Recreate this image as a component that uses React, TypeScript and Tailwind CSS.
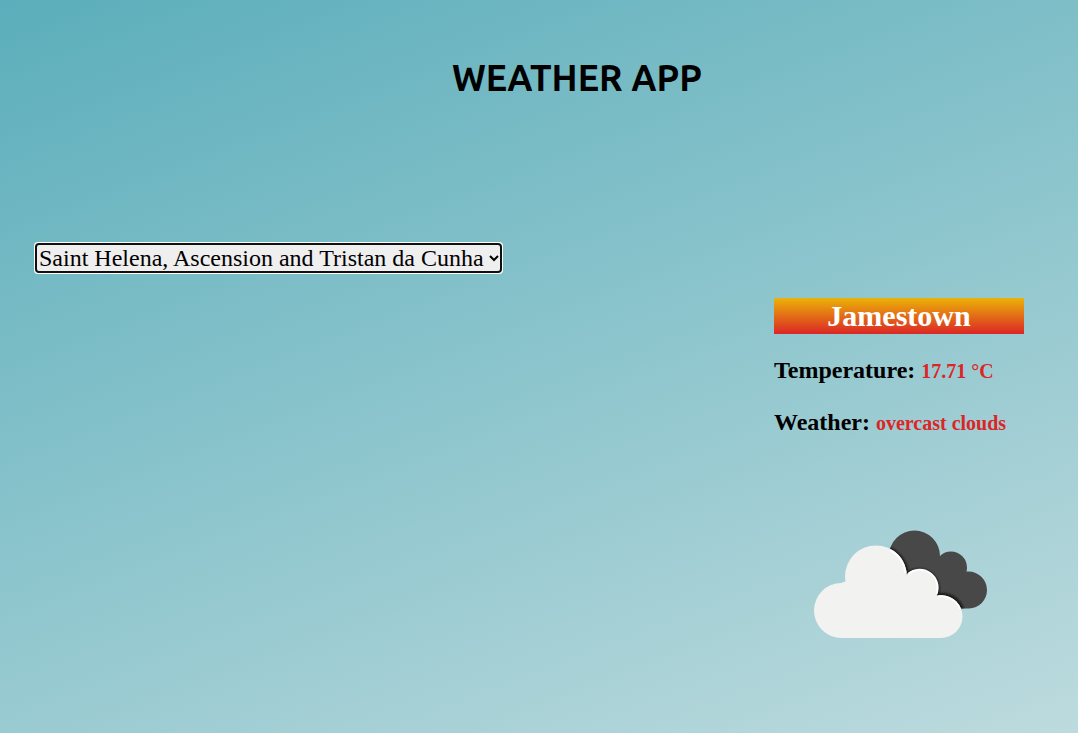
import { useState } from "react";

const reports: Record<string, { city: string; temperature: string; weather: string }> = {
  "Saint Helena, Ascension and Tristan da Cunha": {
    city: "Jamestown",
    temperature: "17.71 °C",
    weather: "overcast clouds",
  },
};

const countries = Object.keys(reports);

function CloudIcon() {
  return (
    <svg viewBox="0 0 174 110" className="h-[110px] w-[174px]" role="img" aria-label="Overcast clouds">
      <defs>
        <clipPath id="dark-cloud">
          <circle cx="100.500" cy="26" r="25.500" />
          <circle cx="137" cy="37.500" r="16" />
          <circle cx="154.500" cy="60" r="18.500" />
          <path d="M85 20 L122 28 L153 42 L155 78.500 L110 78.500 Z" />
        </clipPath>
        <filter id="edge" x="-10%" y="-10%" width="120%" height="120%">
          <feGaussianBlur stdDeviation="1.2" />
        </filter>
        <filter id="glow" x="-10%" y="-10%" width="120%" height="120%">
          <feGaussianBlur stdDeviation="0.5" />
        </filter>
      </defs>
      <g clipPath="url(#dark-cloud)">
        <rect width="174" height="110" fill="#484849" />
        <g fill="#161617" filter="url(#edge)">
          <circle cx="62" cy="47" r="33" />
          <circle cx="105" cy="59" r="20.500" />
          <circle cx="128" cy="86" r="23" />
        </g>
      </g>
      <g fill="#f2f2f0">
        <circle cx="62" cy="46.500" r="31" />
        <circle cx="27.500" cy="80.500" r="27.500" />
        <circle cx="105" cy="59" r="19" />
        <circle cx="127" cy="86.500" r="21.500" />
        <path d="M27 53 L50 45 L95 55 L124 66 L127 108 L27 108 Z" />
      </g>
      <g fill="none" stroke="#ffffff" strokeWidth="2" filter="url(#glow)">
        <path d="M76 20 A30 30 0 0 1 91.500 43" />
        <path d="M94 44 A18 18 0 0 1 122.500 64" />
        <path d="M124 66.500 A20.500 20.500 0 0 1 146 79" />
      </g>
    </svg>
  );
}

export default function App() {
  const [country, setCountry] = useState(countries[0]);
  const report = reports[country];

  return (
    <div className="min-h-screen bg-[linear-gradient(159deg,#5baebb,#bddbde)] font-['Liberation_Serif',serif] text-black">
      <header className="pt-[51px] pl-[76px] text-center">
        <h1 className="font-['Ubuntu','Noto_Sans',sans-serif] text-4xl leading-[54px] font-semibold">WEATHER APP</h1>
      </header>
      <main className="pt-[138px]">
        <div className="flex pl-[35px]">
          <select
            autoFocus
            aria-label="Country"
            value={country}
            onChange={(event) => setCountry(event.target.value)}
            className="h-[30px] bg-[#efefef] text-2xl [outline:auto_1px_-webkit-focus-ring-color] outline-offset-[-1px]"
          >
            {countries.map((name) => (
              <option key={name}>{name}</option>
            ))}
          </select>
        </div>
        <section className="mt-[25px] mr-[54px] ml-auto w-[250px] font-bold">
          <h2 className="bg-[linear-gradient(#eab308,#dc2626)] text-center text-3xl leading-9 text-white">{report.city}</h2>
          <p className="mt-5 text-2xl leading-8">
            Temperature: <span className="text-xl leading-none text-[#dc2626]">{report.temperature}</span>
          </p>
          <p className="mt-5 text-2xl leading-8">
            Weather: <span className="text-xl leading-none text-[#dc2626]">{report.weather}</span>
          </p>
          <div className="mt-[92px] pl-10">
            <CloudIcon />
          </div>
        </section>
      </main>
    </div>
  );
}
